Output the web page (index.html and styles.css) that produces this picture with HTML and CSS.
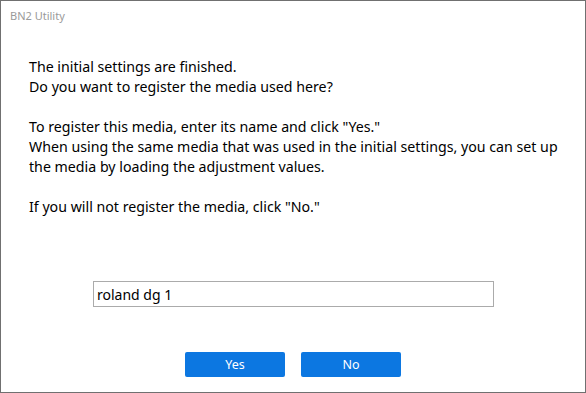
FILE: index.html
```html
<!DOCTYPE html>
<html lang="en">

<head>
    <meta charset="UTF-8">
    <meta name="viewport" content="width=device-width, initial-scale=1.0">
    <title>BN2 Utility</title>
    <link rel="stylesheet" href="styles.css">
</head>

<body>
    <div class="window">
        <header class="title-bar">BN2 Utility</header>
        <main class="dialog">
            <p class="message">
                The initial settings are finished.<br>
                Do you want to register the media used here?
            </p>
            <p class="message">
                To register this media, enter its name and click "Yes."<br>
                When using the same media that was used in the initial settings, you can set up<br>
                the media by loading the adjustment values.
            </p>
            <p class="message">
                If you will not register the media, click "No."
            </p>
            <div class="name-row">
                <input class="media-name" type="text" value="roland dg 1">
            </div>
            <div class="button-row">
                <button class="btn">Yes</button>
                <button class="btn">No</button>
            </div>
        </main>
    </div>
</body>

</html>
```

FILE: styles.css
```css
body {
    margin: 0;
    background: #fff;
}

.window {
    box-sizing: border-box;
    width: 586px;
    height: 393px;
    border: 1px solid #707070;
    display: flex;
    flex-direction: column;
    font-family: "Noto Sans", "Open Sans", sans-serif;
}

.title-bar {
    height: 30px;
    padding: 7px 0 0 9px;
    box-sizing: border-box;
    font-size: 11px;
    color: #9a9a9a;
}

.dialog {
    flex: 1;
    display: flex;
    flex-direction: column;
    padding: 26px 0 0 28px;
}

.message {
    margin: 0 0 20px;
    font-size: 14.2px;
    line-height: 20px;
    color: #000;
}

.name-row {
    margin-top: 44px;
    padding-left: 64px;
}

.media-name {
    box-sizing: border-box;
    width: 401px;
    height: 26px;
    border: 1px solid #ababab;
    padding: 0 3px;
    font-family: inherit;
    font-size: 14px;
    color: #000;
    outline: none;
}

.button-row {
    display: flex;
    gap: 16px;
    margin-top: 45px;
    padding-left: 156px;
}

.btn {
    width: 100px;
    height: 25px;
    border: none;
    border-radius: 2px;
    background: #0c77e1;
    color: #fff;
    font-family: inherit;
    font-size: 12.5px;
}
```
